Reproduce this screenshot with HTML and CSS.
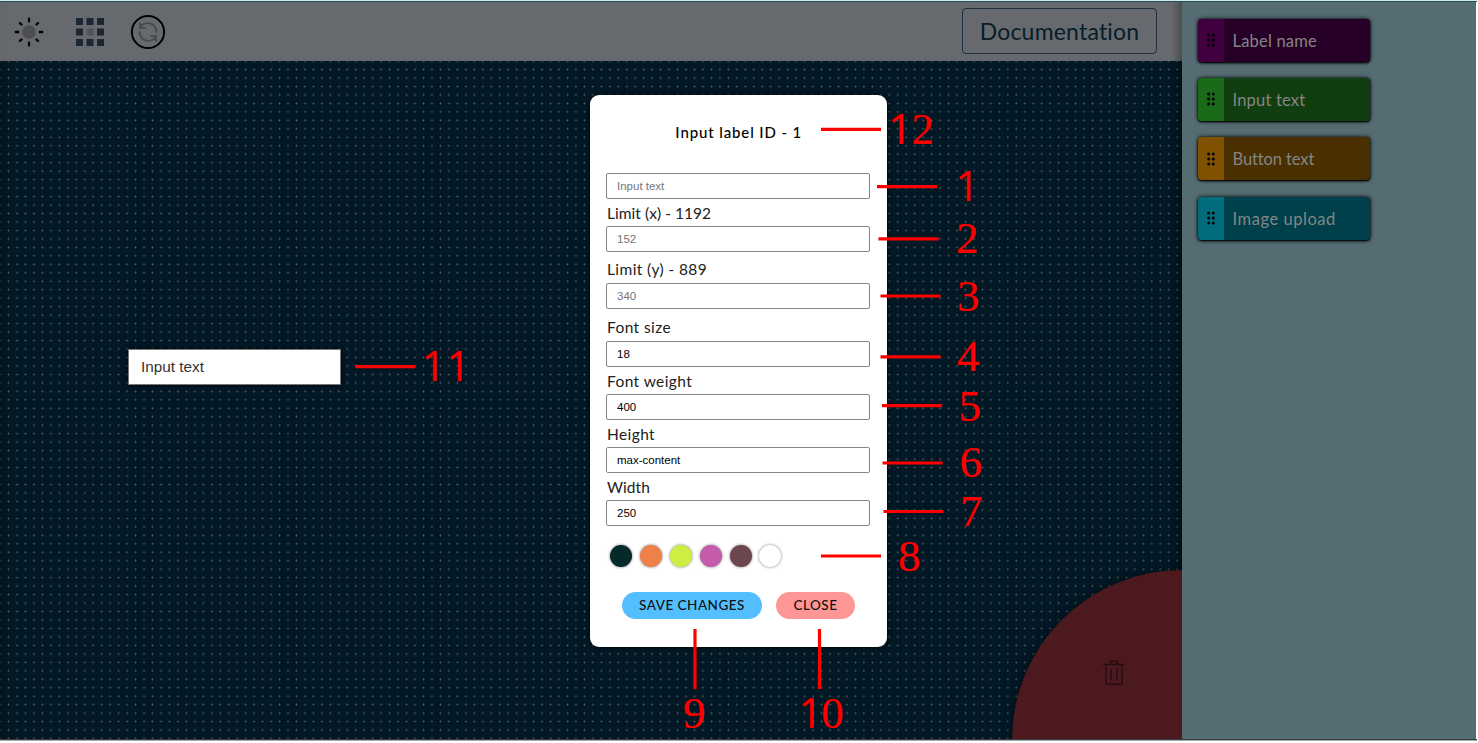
FILE: index.html
```html
<!DOCTYPE html>
<html lang="en">
<head>
<meta charset="utf-8">
<title>Form builder</title>
<link rel="stylesheet" href="styles.css">
</head>
<body>
<div class="app">
  <main class="workspace">
    <header class="topbar">
      <div class="tools">
        <svg class="icon" width="30" height="30" viewBox="0 0 30 30"><circle cx="15" cy="15" r="6.7" fill="#4d4d4d"/><path d="M15 1.8v2.400M15 25.800v2.400M1.800 15h2.400M25.800 15h2.400M6 6l1.500 1.500M22.500 22.500l1.500 1.500M24 6l-1.500 1.500M7.500 22.500l-1.500 1.500" stroke="#000" stroke-width="2.400" stroke-linecap="round"/></svg>
        <svg class="icon" width="28" height="28" viewBox="0 0 28 28" fill="#1a2631"><path d="M0 0h7v7H0zM10.500 0h7v7h-7zM21 0h7v7h-7zM0 10.500h7v7H0zM21 10.500h7v7h-7zM0 21h7v7H0zM10.500 21h7v7h-7zM21 21h7v7h-7z"/><path fill="#555" d="M10.500 10.500h7v7h-7z"/></svg>
        <svg class="icon" width="36" height="36" viewBox="0 0 36 36" fill="none"><circle cx="18" cy="18" r="16.100" stroke="#000" stroke-width="2"/><g stroke="#484a4c" stroke-width="1.900"><path d="M10 13.500C14.500 6.500 26 8 26.500 18.500M26 22.500C21.500 29.500 10 28 9.500 17.500"/><path d="M10 8.500v5.500h5.500M26 27.500V22h-5.500"/></g></svg>
      </div>
      <a class="doc">Documentation</a>
    </header>
    <div class="trash-zone">
      <svg width="22" height="26" viewBox="0 0 22 26" fill="none" stroke="#280c10" stroke-width="1.400"><path d="M0 4.500h22M7.500 4V1.200h7V4M3 5v19.300h16V5M8 8.500v12M14 8.500v12"/></svg>
    </div>
    <div class="placed">Input text</div>
  </main>
  <aside class="sidebar">
    <div class="block purple"><span class="grip"><svg width="8" height="14"><use href="#dots"/></svg></span><span class="name">Label name</span></div>
    <div class="block green"><span class="grip"><svg width="8" height="14"><use href="#dots"/></svg></span><span class="name">Input text</span></div>
    <div class="block amber"><span class="grip"><svg width="8" height="14"><use href="#dots"/></svg></span><span class="name">Button text</span></div>
    <div class="block teal"><span class="grip"><svg width="8" height="14"><use href="#dots"/></svg></span><span class="name">Image upload</span></div>
  </aside>
</div>

<section class="modal">
  <h1>Input label ID - 1</h1>
  <div class="field first"><input placeholder="Input text"></div>
  <div class="field"><label class="tight">Limit (x) - 1192</label><input placeholder="152"></div>
  <div class="field loose"><label>Limit (y) - 889</label><input placeholder="340"></div>
  <div class="field loose"><label>Font size</label><input value="18"></div>
  <div class="field snug"><label>Font weight</label><input value="400"></div>
  <div class="field"><label>Height</label><input value="max-content"></div>
  <div class="field"><label class="tight">Width</label><input value="250"></div>
  <div class="swatches"><i class="c1"></i><i class="c2"></i><i class="c3"></i><i class="c4"></i><i class="c5"></i><i class="c6"></i></div>
  <div class="actions"><button class="save">SAVE CHANGES</button><button class="close">CLOSE</button></div>
</section>

<svg class="notes" width="1478" height="743" viewBox="0 0 1478 743">
  <g stroke="#f00" stroke-width="3.200">
    <path d="M821 129.400h60M877 186.700h60M878.500 238.800h60M880.500 296h60M880.500 356.800h60M882 405.700h60M882.500 463h60M883.500 511.500h60M821 556h60M355.500 366.600h60M695 629v60M819.500 629v60"/>
  </g>
  <g class="digits">
    <text y="144"><tspan class="one" x="888">1</tspan><tspan x="911.500">2</tspan></text>
    <text class="one" x="955.200" y="201">1</text><text x="956" y="252.500">2</text><text x="957" y="311">3</text>
    <text x="957" y="370.500">4</text><text x="958.500" y="420.500">5</text><text x="959.500" y="477">6</text><text x="960" y="526">7</text>
    <text x="898" y="570.500">8</text><text x="683" y="728">9</text>
    <text y="728"><tspan class="one" x="798.600">1</tspan><tspan x="821.300">0</tspan></text>
    <text class="one" x="421.600 446.300" y="381">11</text>
  </g>
</svg>
<svg width="0" height="0" class="defs"><defs><g id="dots"><circle cx="1.700" cy="2" r="1.500"/><circle cx="6.300" cy="2" r="1.500"/><circle cx="1.700" cy="7" r="1.500"/><circle cx="6.300" cy="7" r="1.500"/><circle cx="1.700" cy="12" r="1.500"/><circle cx="6.300" cy="12" r="1.500"/></g></defs></svg>
</body>
</html>
```
FILE: styles.css
```css
* { box-sizing: border-box; }
body { margin: 0; width: 1478px; height: 743px; overflow: hidden; background: #fff; font-family: Lato, sans-serif; position: relative; }
.app { display: flex; width: 1477px; height: 739px; border-top: 1px solid #24525a; border-bottom: 1px solid #333d40; margin-top: 1px; box-shadow: 0 1px 0 #aaa, 0 -1px 0 #d5e8e6; }
.workspace { position: relative; width: 1182px; overflow: hidden; background-color: #021825; background-image: radial-gradient(circle at 4.240px 4.240px, #5d606b 0.600px, transparent 1.200px); background-size: 8.484px 8.484px; background-position: 4.300px 4px; box-shadow: inset -8px 0 8px -6px #000a, inset 6px 0 6px -5px #0007; }
.topbar { height: 59px; display: flex; align-items: center; justify-content: space-between; padding: 0 25px 0 14px; background: linear-gradient(90deg, transparent 1172px, #0004), rgba(107, 110, 113, .95); }
.tools { display: flex; align-items: center; }
.tools .icon:nth-child(2) { margin-left: 31.500px; }
.tools .icon:nth-child(3) { margin-left: 26px; }
.doc { width: 195px; height: 46px; margin-bottom: 1px; border: 1px solid #1c3040; border-radius: 4px; color: #061d2b; font-size: 23px; letter-spacing: .2px; display: flex; align-items: center; justify-content: center; }
.trash-zone { position: absolute; left: 1012px; top: 568px; width: 340px; height: 340px; border-radius: 50%; background: rgba(80, 25, 30, .94); box-shadow: 0 0 8px #0008; padding: 90px 0 0 91px; }
.placed { position: absolute; left: 128px; top: 347px; width: 213px; height: 36px; padding-left: 12px; background: #fff; border: 1px solid #777; box-shadow: 0 0 4px #000; color: #333; font: 15.300px/34px "Liberation Sans", sans-serif; }
.sidebar { width: 294px; padding: 16.600px 0 0 16px; background: #556c72; display: flex; flex-direction: column; gap: 16.400px; }
.block { width: 172px; height: 43px; display: flex; border-radius: 4px; overflow: hidden; box-shadow: 0 0 4px #000, 0 1px 2px #000; color: #858585; }
.grip { width: 26px; display: flex; align-items: center; justify-content: center; }
.name { padding-left: 8.500px; font-size: 16.500px; line-height: 44px; }
.purple { background: #270028; letter-spacing: .2px; } .purple .grip { background: #400040; }
.green { background: #103e10; letter-spacing: .2px; } .green .grip { background: #1a6a1a; }
.amber { background: #4a2f00; letter-spacing: -.1px; } .amber .grip { background: #805200; }
.teal { background: #00404a; letter-spacing: .55px; } .teal .grip { background: #006c7c; }
.modal { position: absolute; left: 589.500px; top: 94.500px; width: 297.500px; height: 552px; padding: 27.500px 16.500px 0; border-radius: 9px; background: #fff; box-shadow: 0 0 5px #000; }
h1 { margin: 0 0 31px; height: 20px; text-align: center; font-size: 15px; line-height: 20px; font-weight: 500; letter-spacing: .88px; text-indent: 1px; }
.field { display: flex; flex-direction: column; height: 53.300px; justify-content: flex-end; }
.field.first { height: 25.500px; }
.field.loose { height: 57.700px; }
.field.snug { height: 52.500px; }
label { font-size: 15.500px; letter-spacing: .4px; line-height: 20px; padding-left: 1px; margin-bottom: 3px; color: #222; }
label.tight { letter-spacing: .05px; }
.loose label { margin-bottom: 4px; }
input { width: 264px; height: 26px; flex: none; padding: 0 10px; border: 1px solid #858585; border-radius: 2px; font: 11.500px "Liberation Sans", sans-serif; color: #000; background: #fff; }
input::placeholder { color: #757575; }
.swatches { display: flex; gap: 7.800px; padding: 19px 0 0 4.400px; }
.swatches i { width: 22px; height: 22px; border-radius: 50%; box-shadow: 0 0 3px #777; }
.c1 { background: #062a2a; } .c2 { background: #ef8048; } .c3 { background: #cdee42; } .c4 { background: #c65aab; } .c5 { background: #6c464e; } .c6 { background: #fff; }
.actions { display: flex; gap: 14px; padding: 25px 0 0 16px; }
button { height: 27px; padding: 0 0 1px; border: 0; border-radius: 14px; font: 500 13.500px Lato, sans-serif; letter-spacing: .5px; color: #111; }
.save { width: 140px; background: #53bfff; }
.close { width: 79px; background: #ff9696; }
.notes { position: absolute; left: 0; top: 0; }
.digits { font: 45px "Liberation Serif", serif; fill: #f00; stroke: #f00; stroke-width: .2px; }
.one { font: 42px "Open Sans", sans-serif; }
.defs { position: absolute; }
```
